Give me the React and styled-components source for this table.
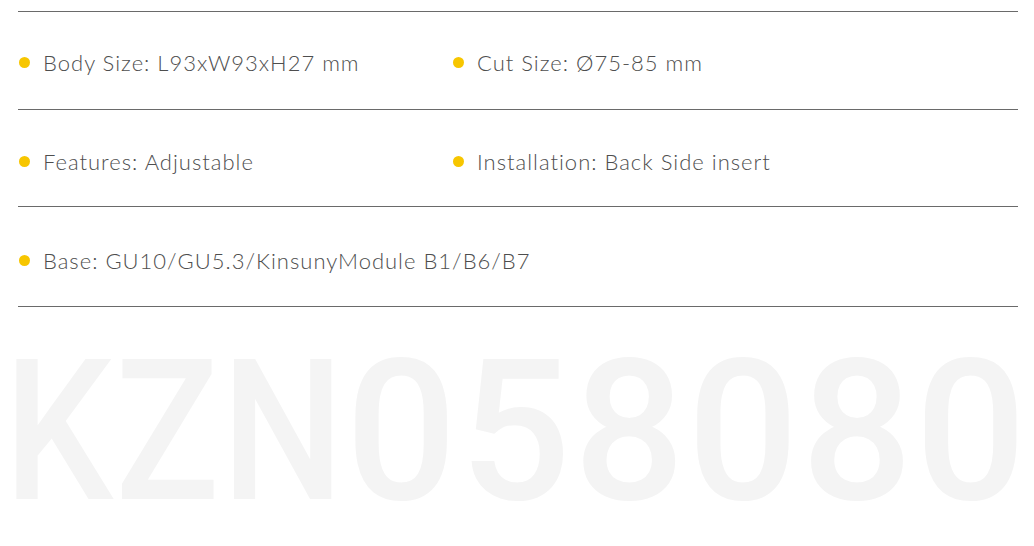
import React from "react";
import styled, { createGlobalStyle } from "styled-components";

const GlobalStyle = createGlobalStyle`
  html, body {
    margin: 0;
    padding: 0;
    background: #ffffff;
    overflow: hidden;
  }
`;

const Page = styled.div`
  width: 1034px;
  height: 546px;
  overflow: hidden;
  padding-top: 11px;
  box-sizing: border-box;
`;

const SpecTable = styled.div`
  width: 1000px;
  margin-left: 18px;
  border-top: 1px solid #6a6a6a;
`;

const SpecRow = styled.div`
  display: grid;
  grid-template-columns: 434px 1fr;
  height: ${(p) => p.height}px;
  padding-left: 1px;
  padding-top: ${(p) => p.shift}px;
  box-sizing: border-box;
  align-items: center;
  border-bottom: 1px solid #6a6a6a;
`;

const SpecItem = styled.div`
  display: flex;
  align-items: center;
  gap: 13px;
  font-family: "Lato", "DejaVu Sans", sans-serif;
  font-weight: 300;
  font-size: 22px;
  letter-spacing: 1px;
  color: #4e4e4e;
  white-space: nowrap;
`;

const Dot = styled.span`
  width: 11px;
  height: 11px;
  border-radius: 50%;
  background: #f7c600;
  flex-shrink: 0;
`;

const ModelMark = styled.div`
  margin-top: 27px;
  padding-left: 4px;
  font-family: "Roboto", "Liberation Sans", sans-serif;
  font-weight: 500;
  font-size: 196px;
  letter-spacing: 2.5px;
  line-height: 1;
  color: #f4f4f4;
  white-space: nowrap;
`;

const Letters = styled.span`
  display: inline-block;
  transform: scaleX(0.88);
  transform-origin: left center;
  margin-right: -47px;
`;

const rows = [
  { h: 98, s: 4, items: ["Body Size: L93xW93xH27 mm", "Cut Size: Ø75-85 mm"] },
  { h: 97, s: 6, items: ["Features: Adjustable", "Installation: Back Side insert"] },
  { h: 100, s: 8, items: ["Base: GU10/GU5.3/KinsunyModule B1/B6/B7"] },
];

export default function App() {
  return (
    <>
      <GlobalStyle />
      <Page>
        <SpecTable>
          {rows.map((row, i) => (
            <SpecRow key={i} height={row.h} shift={row.s}>
              {row.items.map((txt) => (
                <SpecItem key={txt}>
                  <Dot />
                  {txt}
                </SpecItem>
              ))}
            </SpecRow>
          ))}
        </SpecTable>
        <ModelMark>
          <Letters>KZN</Letters>058080
        </ModelMark>
      </Page>
    </>
  );
}
